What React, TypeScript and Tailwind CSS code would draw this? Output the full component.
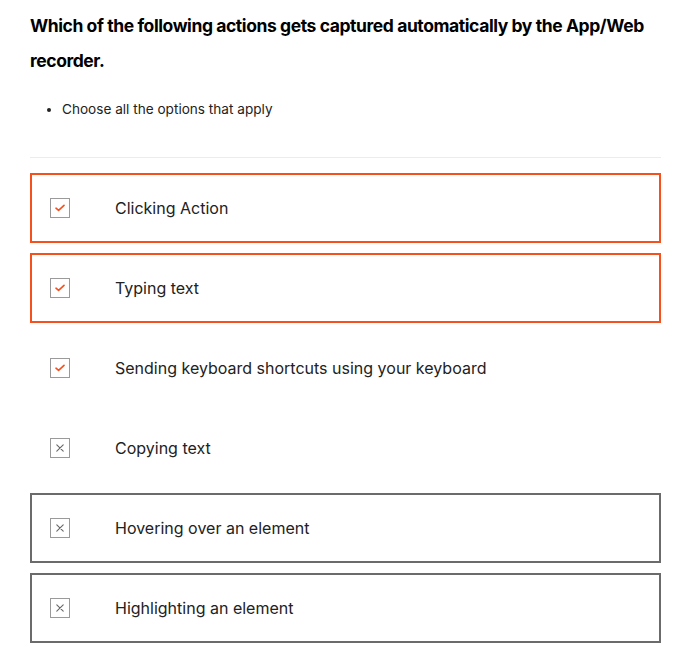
const options = [
  { label: "Clicking Action", checked: true, status: "correct" },
  { label: "Typing text", checked: true, status: "correct" },
  { label: "Sending keyboard shortcuts using your keyboard", checked: true, status: "none" },
  { label: "Copying text", checked: false, status: "none" },
  { label: "Hovering over an element", checked: false, status: "wrong" },
  { label: "Highlighting an element", checked: false, status: "wrong" },
];

const CheckIcon = () => (
  <svg width="10" height="8" viewBox="0 0 10 8" fill="none">
    <path d="M1 4.2 L3.6 6.4 L9 1.4" stroke="#f4511e" strokeWidth="1.6" strokeLinecap="round" strokeLinejoin="round" />
  </svg>
);

const CrossIcon = () => (
  <svg width="8" height="8" viewBox="0 0 8 8" fill="none">
    <path d="M0.8 0.8 L7.2 7.2 M7.2 0.8 L0.8 7.2" stroke="#666" strokeWidth="1.1" strokeLinecap="round" />
  </svg>
);

const App = () => {
  return (
    <div className="w-[692px] min-h-[664px] bg-white px-[30px] pt-[8px] font-['Inter',sans-serif] text-[#1a1a1a]">
      <h2 className="text-[17.5px] font-bold leading-[35px] tracking-[-0.42px] text-black">
        Which of the following actions gets captured automatically by the App/Web recorder.
      </h2>
      <ul className="mt-[21px] list-disc pl-[32px] text-[13.6px] leading-[20px] text-[#222]">
        <li>Choose all the options that apply</li>
      </ul>
      <div className="mt-[38px] w-[631px] border-t border-[#ececec]" />
      <div className="mt-[15px] flex w-[631px] flex-col gap-[10px]">
        {options.map((option, index) => {
          const border =
            option.status === "correct"
              ? "border-2 border-[#f4511e]"
              : option.status === "wrong"
              ? "border-2 border-[#6b6b6b]"
              : "border-2 border-transparent";
          return (
            <div key={index} className={`flex h-[70px] items-center ${border}`}>
              <div className="ml-[18px] flex h-[20px] w-[20px] items-center justify-center border border-[#9a9a9a] bg-white">
                {option.checked ? <CheckIcon /> : <CrossIcon />}
              </div>
              <span className="ml-[45px] text-[16px] text-[#222]">{option.label}</span>
            </div>
          );
        })}
      </div>
    </div>
  );
};

export default App;
